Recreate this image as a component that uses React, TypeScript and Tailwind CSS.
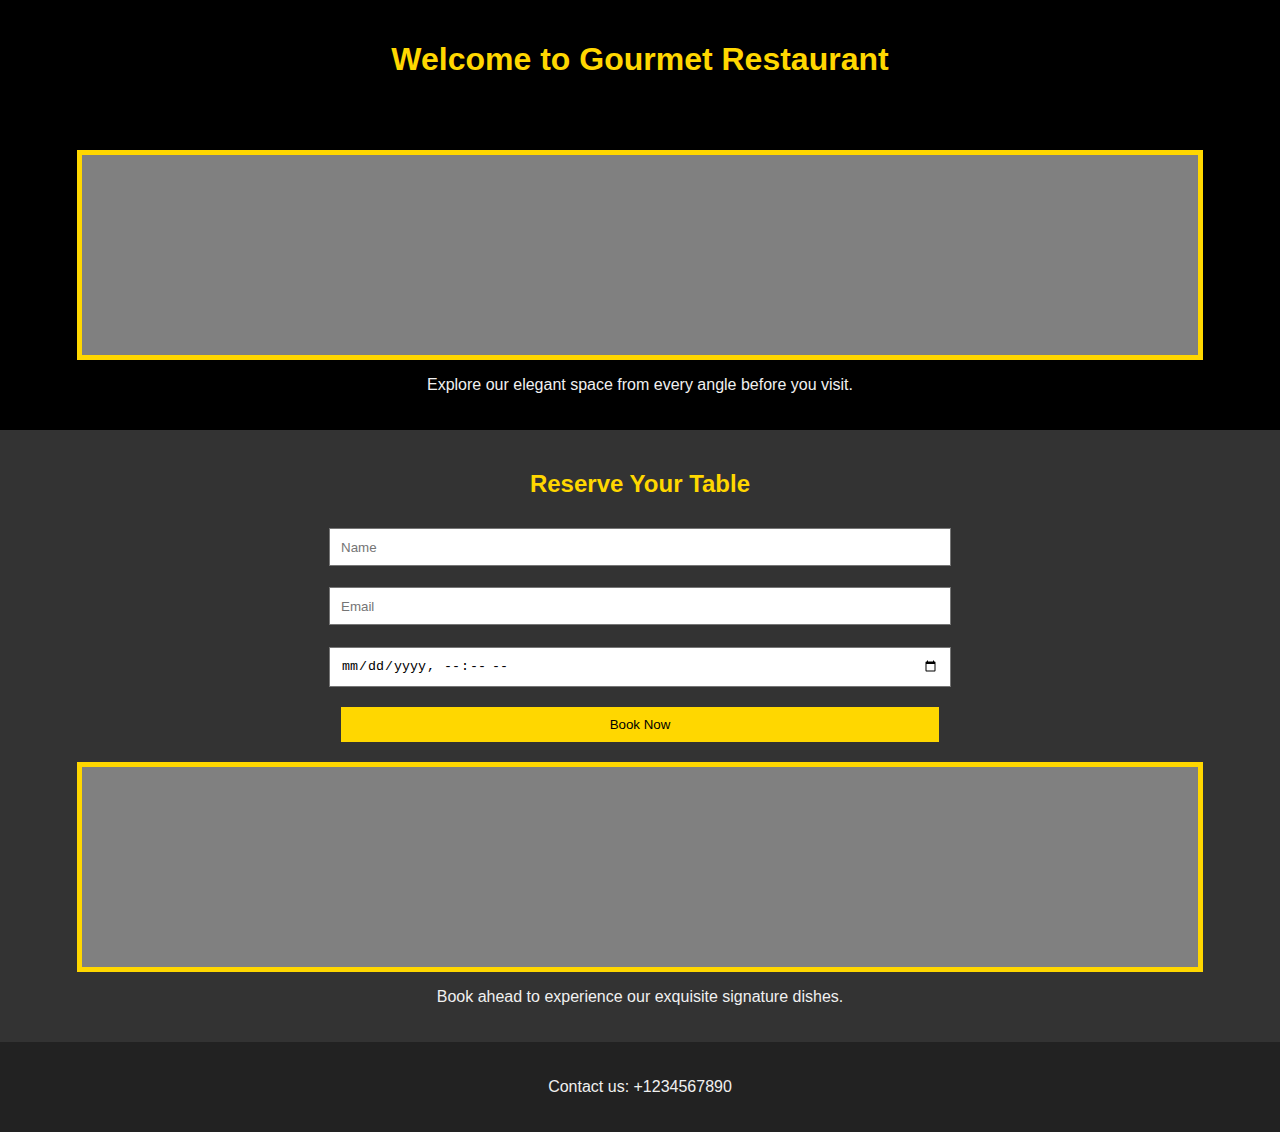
import React from "react";

export default function App() {
  const sans = { fontFamily: '"Liberation Sans", Arial, sans-serif' };
  return (
    <div className="w-full" style={sans}>
      <header className="bg-black pt-[41px] pb-[38px] text-center">
        <h1 className="text-[32px] font-bold leading-[37px] text-[#ffd700]">
          Welcome to Gourmet Restaurant
        </h1>
      </header>
      <section className="bg-black pt-[34px] pb-[36px] flex flex-col items-center">
        <div className="w-[1126px] h-[210px] border-[5px] border-[#ffd700] bg-[#808080]" />
        <p className="mt-[16px] text-[16px] leading-[18px] text-[#f0f0f0]">
          Explore our elegant space from every angle before you visit.
        </p>
      </section>
      <section className="bg-[#333333] pt-[40px] pb-[36px] flex flex-col items-center">
        <h2 className="text-[24px] font-bold leading-[28px] text-[#ffd700]">Reserve Your Table</h2>
        <form className="mt-[30px] flex flex-col items-center" onSubmit={(e) => e.preventDefault()}>
          <input
            type="text"
            placeholder="Name"
            className="w-[622px] h-[38px] bg-white border border-[#767676] px-[11px] text-[13.33px] text-black placeholder:text-[#757575] outline-none"
          />
          <input
            type="email"
            placeholder="Email"
            className="mt-[21px] w-[622px] h-[38px] bg-white border border-[#767676] px-[11px] text-[13.33px] text-black placeholder:text-[#757575] outline-none"
          />
          <input
            type="datetime-local"
            className="mt-[22px] w-[622px] h-[40px] bg-white border border-[#767676] px-[11px] text-[13.33px] text-black outline-none"
            style={{ fontFamily: '"Liberation Mono", "DejaVu Sans Mono", monospace' }}
          />
          <button
            type="submit"
            className="mt-[20px] w-[598px] h-[35px] bg-[#ffd700] text-[13.33px] text-black"
          >
            Book Now
          </button>
        </form>
        <div className="mt-[20px] w-[1126px] h-[210px] border-[5px] border-[#ffd700] bg-[#808080]" />
        <p className="mt-[16px] text-[16px] leading-[18px] text-[#f0f0f0]">
          Book ahead to experience our exquisite signature dishes.
        </p>
      </section>
      <footer className="bg-[#222222] pt-[36px] pb-[36px] text-center">
        <p className="text-[16px] leading-[18px] text-[#f0f0f0]">Contact us: +1234567890</p>
      </footer>
    </div>
  );
}
